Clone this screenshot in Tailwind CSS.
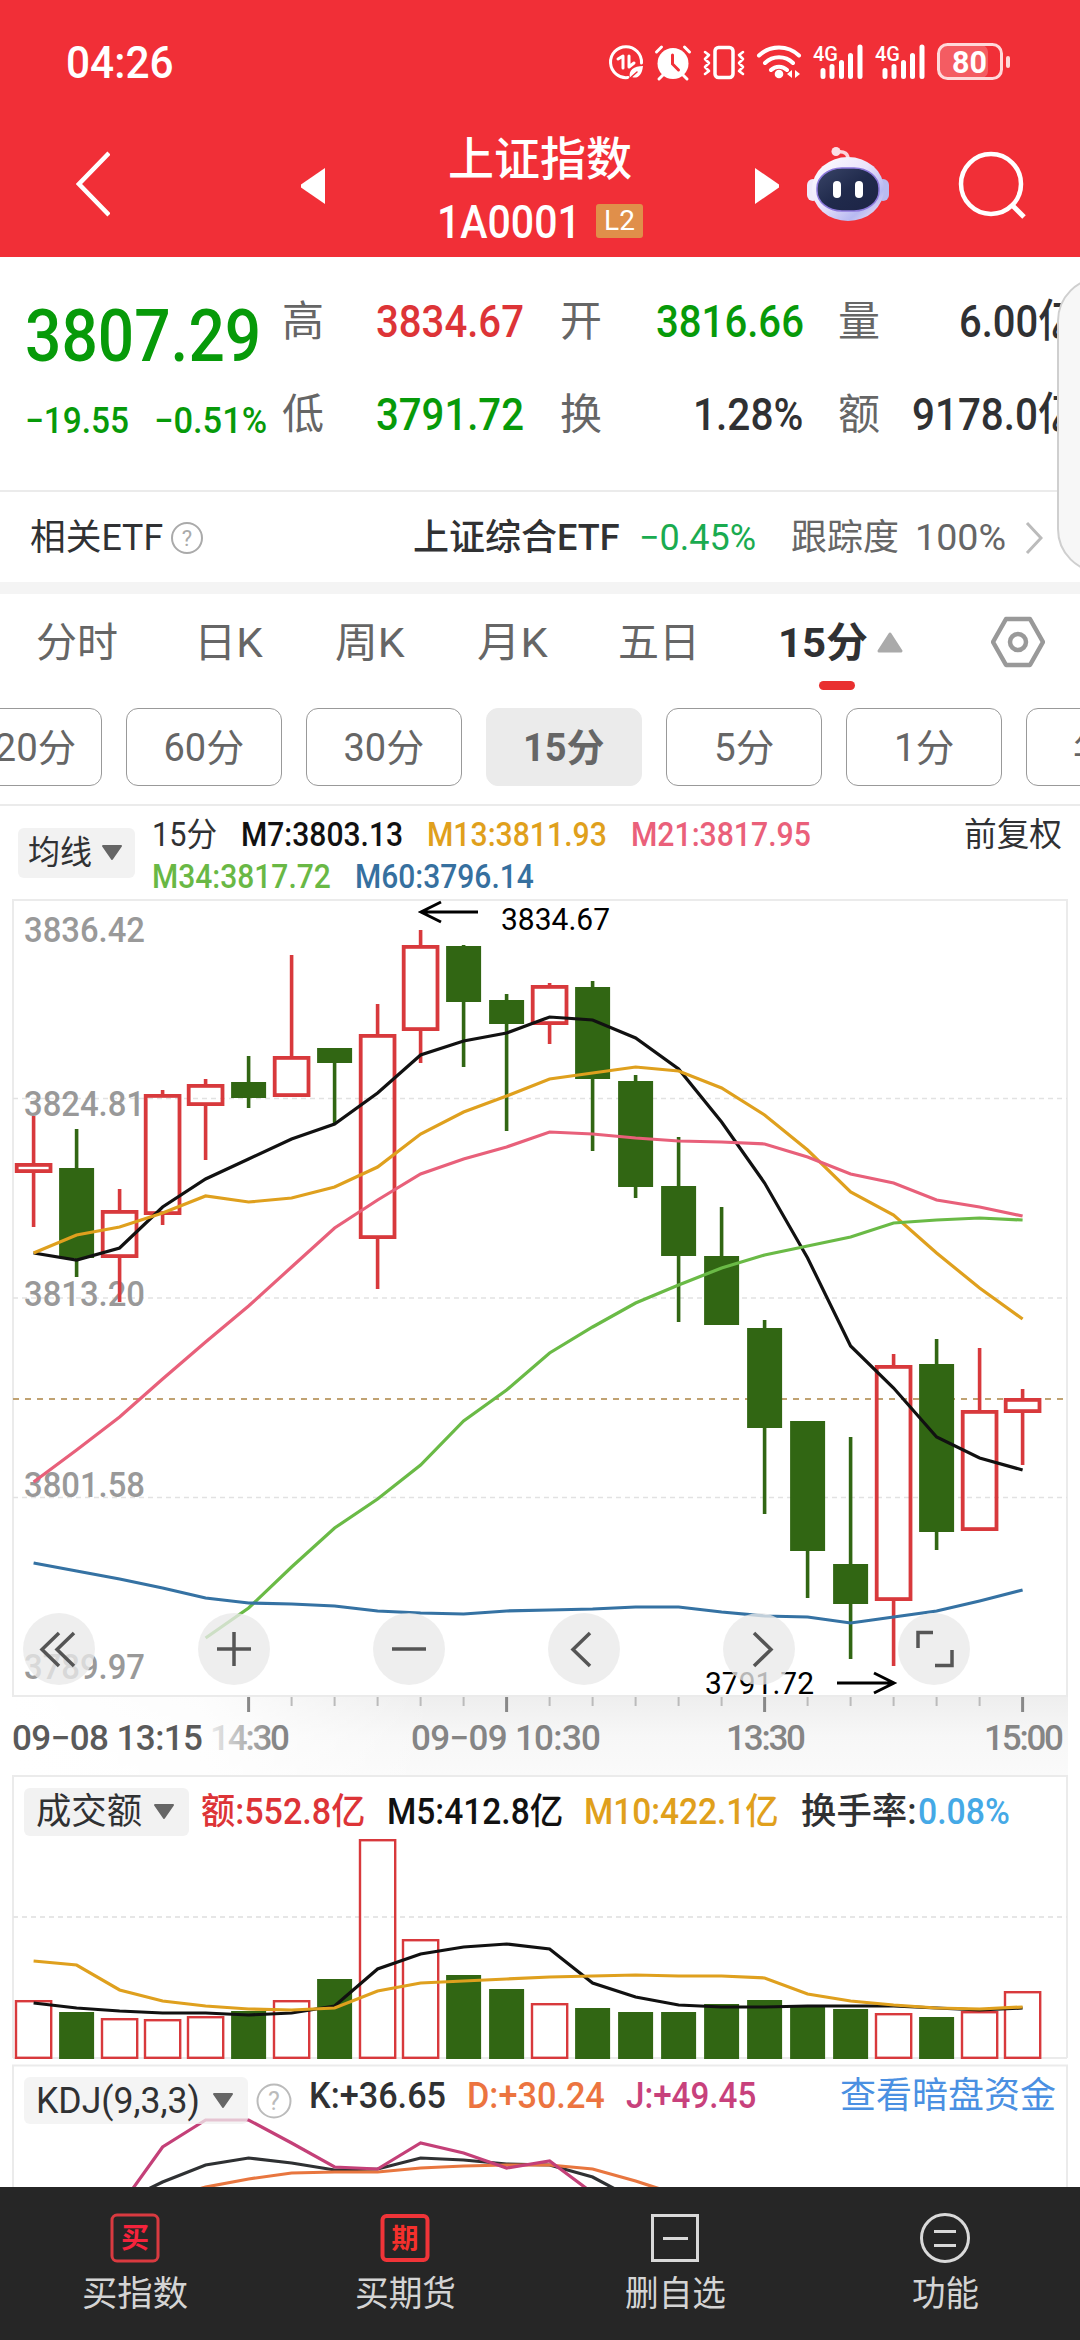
<!DOCTYPE html>
<html lang="zh-CN">
<head>
    <meta charset="UTF-8">
    <meta name="viewport" content="width=device-width, initial-scale=1.0">
    <title>上证指数 1A0001</title>
    <script src="https://cdn.jsdelivr.net/npm/@tailwindcss/browser@4"></script>
    <style>
        body { font-family: Roboto, "Noto Sans CJK SC", sans-serif; }
        [data-w] { display: inline-block; white-space: nowrap; transform-origin: left center; }
    </style>
</head>
<body class="bg-white w-[1080px] h-[2340px] overflow-hidden relative text-[#303133]">

    <!-- Header -->
    <header class="bg-[#f12f37] h-[257px] text-white">
        <div class="h-[124px] pl-[66px] pr-[70px] flex items-center justify-between">
            <span data-w="108" class="text-[44px] font-medium leading-none pt-[2px]">04:26</span>
            <svg class="w-[404px] h-[40px]" viewBox="605 41 404 40" fill="none" stroke="#fff" stroke-linecap="round">
                <!-- data saver -->
                <path d="M627 76.500A15.500 15.500 0 1 1 640.500 62" stroke-width="3"/>
                <path d="M617 58l5-3v12M628 55v11l5-4" stroke-width="3" stroke-linejoin="round"/>
                <path d="M629 77c-2-8 4-12 13-12c-1 10-6 13-11 11z" fill="#fff" stroke="none"/>
                <path d="M627 79l9-8" stroke="#f12f37" stroke-width="1.500"/>
                <!-- alarm -->
                <circle cx="672" cy="62.500" r="15.500" fill="#fff" stroke="none"/>
                <path d="M655.500 51l5-5M688.500 51l-5-5M662 74l-4 4M682 74l4 4" stroke-width="3"/>
                <path d="M671.500 54v9l6 6" stroke="#f12f37" stroke-width="3"/>
                <!-- vibrate -->
                <rect x="714" y="46.500" width="18" height="30" rx="3.500" stroke-width="3.500"/>
                <path d="M704 51l4 3l-4 4l4 4l-4 4l4 4l-4 3M742 51l-4 3l4 4l-4 4l4 4l-4 4l4 3" stroke-width="2.600" stroke-linejoin="round"/>
                <!-- wifi -->
                <path d="M758 54.500a29 29 0 0 1 40 0M764 62a20 20 0 0 1 28 0M770 69a11.500 11.500 0 0 1 16 0" stroke-width="4"/>
                <circle cx="778" cy="73" r="4.300" fill="#fff" stroke="none"/>
                <path d="M786 73l5-4v8zM799 73l-5-4v8z" fill="#fff" stroke="none"/>
                <!-- signal bars -->
                <path d="M822 69.500v6M831 65.500v10M840.500 61.500v14M849.500 54.500v21M859 46v29.500" stroke-width="5"/>
                <path d="M884 69.500v6M893 65.500v10M902.500 61.500v14M911.500 54.500v21M921 46v29.500" stroke-width="5"/>
                <g fill="#fff" stroke="none" font-size="21" font-weight="500">
                    <text x="812" y="60" textLength="25" lengthAdjust="spacingAndGlyphs">4G</text>
                    <text x="874" y="60" textLength="25" lengthAdjust="spacingAndGlyphs">4G</text>
                </g>
                <!-- battery -->
                <rect x="938" y="44" width="49" height="33" rx="7" fill="#fff" fill-opacity=".22" stroke="none"/>
                <rect x="937.500" y="43.500" width="63" height="34" rx="9" stroke="#ffd9da" stroke-width="3"/>
                <path d="M1007 57v8" stroke="#ffd9da" stroke-width="4"/>
                <text x="951" y="71.500" textLength="35" lengthAdjust="spacingAndGlyphs" fill="#fff" stroke="none" font-size="31" font-weight="700">80</text>
            </svg>
        </div>
        <div class="h-[133px] flex items-center">
            <svg class="w-[34px] h-[66px] ml-[76px] mb-[14px]" viewBox="0 0 34 66" fill="none" stroke="#fff" stroke-width="4.500"><path d="M33 2L3 33l30 31"/></svg>
            <svg class="w-[24px] h-[36px] ml-[191px] mb-[9px]" viewBox="0 0 24 36"><path d="M24 0v36L0 19.500v-3z" fill="#fff"/></svg>
            <div class="w-[430px] flex flex-col items-center pt-[5px]">
                <div class="text-[46px] font-medium leading-[60px]">上证指数</div>
                <div class="flex items-center gap-[15px] h-[68px] pb-[4px]">
                    <span data-w="144" class="text-[47px] font-medium leading-none">1A0001</span>
                    <span class="w-[47px] h-[34px] rounded-[3px] bg-[#e08f4a] text-[28px] leading-[34px] text-center">L2</span>
                </div>
            </div>
            <svg class="w-[24px] h-[36px] mb-[9px]" viewBox="0 0 24 36"><path d="M0 0v36l24-16.500v-3z" fill="#fff"/></svg>
            <svg class="w-[82px] h-[76px] ml-[28px] mb-[14px]" viewBox="0 0 82 76">
                <defs>
                    <linearGradient id="shell" x1="0" y1="0" x2="1" y2="1">
                        <stop offset="0" stop-color="#fff"/><stop offset=".45" stop-color="#ebe4fb"/><stop offset=".75" stop-color="#b7b9f2"/><stop offset="1" stop-color="#fbe8f0"/>
                    </linearGradient>
                    <linearGradient id="visor" x1="0" y1="0" x2="1" y2="1">
                        <stop offset="0" stop-color="#3a4568"/><stop offset=".5" stop-color="#202a4c"/><stop offset="1" stop-color="#1c2345"/>
                    </linearGradient>
                </defs>
                <path d="M30 6c7-1 12 1 11 10" fill="none" stroke="#fbd5dc" stroke-width="3.500"/>
                <circle cx="29" cy="5.500" r="4.500" fill="#fbdfe6"/>
                <rect x="0" y="33" width="12" height="22" rx="6" fill="#efeafb"/>
                <rect x="70" y="33" width="12" height="22" rx="6" fill="#b9bbf0"/>
                <ellipse cx="41" cy="43" rx="36" ry="32" fill="url(#shell)"/>
                <rect x="10" y="22" width="62" height="43" rx="25" ry="20" fill="url(#visor)" stroke="#8d79dc" stroke-width="1.500"/>
                <rect x="26" y="35" width="8" height="17" rx="4" fill="#fff"/>
                <rect x="48" y="35" width="8" height="17" rx="4" fill="#fff"/>
            </svg>
            <svg class="w-[68px] h-[68px] ml-[69px] mb-[12px]" viewBox="0 0 68 68" fill="none" stroke="#fff"><circle cx="33" cy="33" r="30" stroke-width="4.500"/><path d="M54 54l12 12" stroke-width="5"/></svg>
        </div>
    </header>

    <!-- Quote -->
    <section class="relative h-[235px] border-b-2 border-[#ebebeb] flex pl-[25px] pt-[18px]">
        <div class="w-[257px] text-[#079a09] font-medium">
            <div class="h-[122px] flex items-center"><span data-w="236" class="text-[73px] leading-none">3807.29</span></div>
            <div class="h-[48px] flex items-center gap-[25px] text-[36px] leading-none">
                <span data-w="104">−19.55</span>
                <span data-w="113">−0.51%</span>
            </div>
        </div>
        <div class="grid grid-cols-[94px_184px_96px_182px_74px_168px] auto-rows-[93px] items-center text-[45px] font-medium leading-none h-[186px]">
            <span class="text-[42px] font-normal text-[#666]">高</span><span data-w="148" class="text-[#dd3437]">3834.67</span>
            <span class="text-[42px] font-normal text-[#666]">开</span><span data-w="148" class="text-[#079a09]">3816.66</span>
            <span class="text-[42px] font-normal text-[#666]">量</span><span class="pl-[47px]"><span data-w="119">6.00亿</span></span>
            <span class="text-[42px] font-normal text-[#666]">低</span><span data-w="148" class="text-[#079a09]">3791.72</span>
            <span class="text-[42px] font-normal text-[#666]">换</span><span class="pl-[37px]"><span data-w="110">1.28%</span></span>
            <span class="text-[42px] font-normal text-[#666]">额</span><span data-w="166">9178.0亿</span>
        </div>
    </section>

    <!-- Related ETF -->
    <section class="h-[90px] flex items-center pl-[30px] pt-[2px] text-[36px] leading-none">
        <span data-w="133">相关ETF</span>
        <svg class="w-[34px] h-[34px] ml-[7px]" viewBox="0 0 34 34"><circle cx="17" cy="17" r="15" fill="none" stroke="#aaa" stroke-width="2"/><text x="17" y="25" text-anchor="middle" font-size="22" fill="#aaa">?</text></svg>
        <span data-w="206" class="font-medium ml-[209px]">上证综合ETF</span>
        <span data-w="117" class="text-[#1aab50] ml-[20px]">−0.45%</span>
        <span class="text-[#666] ml-[35px]">跟踪度</span>
        <span data-w="91" class="text-[#666] ml-[16px]">100%</span>
        <svg class="w-[18px] h-[34px] ml-[19px]" viewBox="0 0 18 34" fill="none" stroke="#bbb" stroke-width="3"><path d="M2 2l14 15L2 32"/></svg>
    </section>
    <div class="h-[12px] bg-[#f4f4f4]"></div>

    <!-- Period tabs -->
    <nav class="h-[114px] flex items-start pl-[36px] pt-[21px] text-[41px] leading-[56px] text-[#666]">
        <span class="w-[158px]">分时</span>
        <span class="w-[141px]"><span data-w="69">日K</span></span>
        <span class="w-[142px]"><span data-w="70">周K</span></span>
        <span class="w-[141px]"><span data-w="71">月K</span></span>
        <span class="w-[160px]">五日</span>
        <span class="w-[213px] h-[56px] relative flex items-center gap-[9px] text-[#303133]">
            <span data-w="90" class="font-bold">15分</span>
            <svg class="w-[26px] h-[22px]" viewBox="0 0 26 22"><path d="M13 2L24 19H2z" fill="#aaa" stroke="#aaa" stroke-width="3" stroke-linejoin="round"/></svg>
            <i class="absolute left-[41px] top-[66px] w-[36px] h-[9px] rounded-full bg-[#e93030]"></i>
        </span>
        <svg class="w-[54px] h-[52px] mt-[1px]" viewBox="0 0 54 52" fill="none" stroke="#999" stroke-width="4.500"><path d="M15 3h24L52 26L39 49H15L2 26z" stroke-linejoin="round"/><circle cx="27" cy="26" r="8"/></svg>
    </nav>
    <div class="w-[1080px] h-[98px] overflow-hidden border-b-2 border-[#ebebeb]">
        <div class="w-[1236px] -ml-[54px] flex gap-[24px] text-[38px] text-[#666] leading-[78px] text-center">
            <div class="w-[156px] h-[78px] rounded-[12px] border border-[#999]"><span data-w="103">120分</span></div>
            <div class="w-[156px] h-[78px] rounded-[12px] border border-[#999]"><span data-w="81">60分</span></div>
            <div class="w-[156px] h-[78px] rounded-[12px] border border-[#999]"><span data-w="81">30分</span></div>
            <div class="w-[156px] h-[78px] rounded-[12px] border border-[#ebebeb] bg-[#ebebeb] font-bold"><span data-w="82">15分</span></div>
            <div class="w-[156px] h-[78px] rounded-[12px] border border-[#999]"><span data-w="60">5分</span></div>
            <div class="w-[156px] h-[78px] rounded-[12px] border border-[#999]"><span data-w="60">1分</span></div>
            <div class="w-[156px] h-[78px] rounded-[12px] border border-[#999]"><span data-w="62">年K</span></div>
        </div>
    </div>

    <!-- MA legend -->
    <section class="h-[93px] flex pl-[18px] pr-[18px] text-[33px] font-medium leading-[40px]">
        <div class="w-[117px] h-[50px] mt-[22px] rounded-[6px] bg-[#f2f2f2] flex items-center gap-[9px] pl-[10px] font-normal">
            <span data-w="64">均线</span>
            <svg class="w-[22px] h-[16px]" viewBox="0 0 22 16"><path d="M2 1h18l-9 13z" fill="#666" stroke="#666" stroke-width="2" stroke-linejoin="round"/></svg>
        </div>
        <div class="ml-[17px] mt-[9px]">
            <div class="flex gap-[24px]">
                <span data-w="65" class="font-normal">15分</span>
                <span data-w="162" class="text-[#111]">M7:3803.13</span>
                <span data-w="180" class="text-[#e0a01c]">M13:3811.93</span>
                <span data-w="180" class="text-[#ea607a]">M21:3817.95</span>
            </div>
            <div class="flex gap-[24px] leading-[43px]">
                <span data-w="179" class="text-[#69b845]">M34:3817.72</span>
                <span data-w="179" class="text-[#36709f]">M60:3796.14</span>
            </div>
        </div>
        <span class="ml-auto mt-[9px] font-normal"><span data-w="98">前复权</span></span>
    </section>

    <!-- Candles -->
    <svg class="block w-[1080px] h-[876px]" viewBox="0 899 1080 876">
        <defs>
            <linearGradient id="axisV" x1="0" y1="0" x2="0" y2="1"><stop offset="0" stop-color="#eeeeee"/><stop offset=".5" stop-color="#f7f7f7"/><stop offset="1" stop-color="#fafafa"/></linearGradient>
            <linearGradient id="axisH"><stop offset="0" stop-color="#fff"/><stop offset=".45" stop-color="#fff" stop-opacity=".85"/><stop offset="1" stop-color="#fff" stop-opacity="0"/></linearGradient>
            <linearGradient id="fade" gradientUnits="userSpaceOnUse" x1="208" x2="275"><stop offset="0" stop-color="#f0f0f0"/><stop offset="1" stop-color="#858585"/></linearGradient>
        </defs>
        <rect x="13" y="1697" width="1055" height="78" fill="url(#axisV)"/>
        <rect x="13" y="1697" width="420" height="78" fill="url(#axisH)"/>
        <rect x="13" y="900" width="1054" height="796" fill="none" stroke="#ebebeb" stroke-width="2"/>
        <path d="M13 1098.500H1067M13 1298H1067M13 1497.500H1067" stroke="#e2e2e2" stroke-width="1.500" stroke-dasharray="5 4"/>
        <path d="M13 1399H1067" stroke="#c0a272" stroke-width="2" stroke-dasharray="6 6"/>
        <g fill="#999" font-size="35" font-weight="500">
            <text x="24" y="942" textLength="121" lengthAdjust="spacingAndGlyphs">3836.42</text>
            <text x="24" y="1116" textLength="121" lengthAdjust="spacingAndGlyphs">3824.81</text>
            <text x="24" y="1306" textLength="121" lengthAdjust="spacingAndGlyphs">3813.20</text>
            <text x="24" y="1497" textLength="121" lengthAdjust="spacingAndGlyphs">3801.58</text>
            <text x="24" y="1679" textLength="121" lengthAdjust="spacingAndGlyphs">3789.97</text>
        </g>
        <g id="candles"></g>
        <g fill="none" stroke="#000" stroke-width="3">
            <path d="M478 912H421M441 902L421 912L441 922"/>
            <path d="M837 1683H894M874 1673L894 1683L874 1693"/>
        </g>
        <g fill="#000" font-size="31">
            <text x="501" y="930" textLength="109" lengthAdjust="spacingAndGlyphs">3834.67</text>
            <text x="705" y="1694" textLength="109" lengthAdjust="spacingAndGlyphs">3791.72</text>
        </g>
        <g fill="#e9e9e9" fill-opacity=".78">
            <circle cx="59" cy="1649" r="36"/><circle cx="234" cy="1649" r="36"/><circle cx="409" cy="1649" r="36"/>
            <circle cx="584" cy="1649" r="36"/><circle cx="759" cy="1649" r="36"/><circle cx="934" cy="1649" r="36"/>
        </g>
        <g fill="none" stroke="#555" stroke-width="3.500">
            <path d="M59 1633L42 1649.500L59 1666M74 1633L57 1649.500L74 1666"/>
            <path d="M217 1649H251M234 1632V1666"/>
            <path d="M392 1649H426"/>
            <path d="M590 1633L573 1649.500L590 1666"/>
            <path d="M754 1633L771 1649.500L754 1666"/>
            <path d="M918 1648V1632.500H933M952 1650V1665.500H935"/>
        </g>
        <g id="ticks"></g>
        <g fill="#858585" font-size="35" font-weight="500">
            <text x="12" y="1750" textLength="191" fill="#5a5a5a">09−08 13:15</text>
            <text x="210" y="1750" textLength="80" fill="url(#fade)">14:30</text>
            <text x="411" y="1750" textLength="190">09−09 10:30</text>
            <text x="726" y="1750" textLength="80">13:30</text>
            <text x="984" y="1750" textLength="80">15:00</text>
        </g>
    </svg>

    <!-- Turnover -->
    <section class="relative h-[288px]">
        <svg class="block w-[1080px] h-[288px]" viewBox="0 1775 1080 288">
            <path d="M13 2058V1776H1067V2058" fill="none" stroke="#ebebeb" stroke-width="2"/>
            <path d="M13 2058H1067" stroke="#ebebeb" stroke-width="2"/>
            <path d="M13 1917H1067" stroke="#e6e6e6" stroke-width="2" stroke-dasharray="5 4"/>
            <g id="volume"></g>
        </svg>
        <div class="absolute left-[24px] top-[12px] flex items-center text-[36px] font-medium leading-[50px]">
            <div class="w-[165px] h-[48px] rounded-[6px] bg-[#f2f2f2] flex items-center gap-[11px] pl-[12px] font-normal">
                <span data-w="106">成交额</span>
                <svg class="w-[22px] h-[16px]" viewBox="0 0 22 16"><path d="M2 1h18l-9 13z" fill="#666" stroke="#666" stroke-width="2" stroke-linejoin="round"/></svg>
            </div>
            <span data-w="164" class="ml-[12px] text-[#dd3437]">额:552.8亿</span>
            <span data-w="176" class="ml-[22px] text-[#111]">M5:412.8亿</span>
            <span data-w="195" class="ml-[21px] text-[#e0a01c]">M10:422.1亿</span>
            <span data-w="116" class="ml-[22px]">换手率:</span>
            <span data-w="92" class="ml-[1px] text-[#45a9e6]">0.08%</span>
        </div>
    </section>

    <!-- KDJ -->
    <section class="relative h-[124px]">
        <svg class="block w-[1080px] h-[124px]" viewBox="0 2063 1080 124">
            <path d="M13 2190V2065.500H1067V2190" fill="none" stroke="#ebebeb" stroke-width="2"/>
            <g id="kdj"></g>
        </svg>
        <div class="absolute left-[24px] top-[14px] w-[1032px] flex text-[36px] leading-[38px]">
            <div class="w-[224px] h-[47px] rounded-[6px] bg-[#f0f0f0]/75 flex items-center gap-[12px] pl-[12px]">
                <span data-w="164">KDJ(9,3,3)</span>
                <svg class="w-[22px] h-[16px]" viewBox="0 0 22 16"><path d="M2 1h18l-9 13z" fill="#666" stroke="#666" stroke-width="2" stroke-linejoin="round"/></svg>
            </div>
            <svg class="w-[36px] h-[36px] ml-[8px] mt-[6px]" viewBox="0 0 36 36"><circle cx="18" cy="18" r="16.500" fill="none" stroke="#bbb" stroke-width="2"/><text x="18" y="27" text-anchor="middle" font-size="25" fill="#bbb">?</text></svg>
            <span data-w="137" class="ml-[17px] font-medium">K:+36.65</span>
            <span data-w="138" class="ml-[21px] font-medium text-[#ec7440]">D:+30.24</span>
            <span data-w="130" class="ml-[21px] font-medium text-[#c8417c]">J:+49.45</span>
            <span class="ml-auto text-[#4a90e2]">查看暗盘资金</span>
        </div>
    </section>

    <!-- Bottom bar -->
    <footer class="h-[153px] bg-[#262626] grid grid-cols-4 text-[35px] leading-[44px] text-[#d4d4d4]">
        <div class="flex flex-col items-center pt-[26px] gap-[10px]">
            <svg class="w-[50px] h-[50px]" viewBox="0 0 50 50"><rect x="2" y="2" width="46" height="46" rx="5" fill="none" stroke="#d93a40" stroke-width="3"/><text x="25" y="35" text-anchor="middle" font-size="28" font-weight="700" fill="#f5233c">买</text></svg>
            <span data-w="106">买指数</span>
        </div>
        <div class="flex flex-col items-center pt-[26px] gap-[10px]">
            <svg class="w-[50px] h-[50px]" viewBox="0 0 50 50"><rect x="2.500" y="3" width="45" height="44" rx="4" fill="none" stroke="#f03438" stroke-width="4"/><text x="25" y="35" text-anchor="middle" font-size="27" font-weight="700" fill="#f5302c">期</text></svg>
            <span data-w="101">买期货</span>
        </div>
        <div class="flex flex-col items-center pt-[26px] gap-[10px]">
            <svg class="w-[50px] h-[50px]" viewBox="0 0 50 50" fill="none" stroke="#d9d9d9" stroke-width="3"><path d="M2.500 2.500h45v45h-45zM13 25.500h25"/></svg>
            <span data-w="101">删自选</span>
        </div>
        <div class="flex flex-col items-center pt-[26px] gap-[10px]">
            <svg class="w-[50px] h-[50px]" viewBox="0 0 50 50" fill="none" stroke="#d9d9d9" stroke-width="3"><circle cx="25" cy="25" r="23.500"/><path d="M14 18.500h22M14 32.500h22"/></svg>
            <span data-w="67">功能</span>
        </div>
    </footer>

    <!-- Side drawer handle -->
    <div class="absolute left-[1057px] top-[277px] w-[23px] h-[296px] overflow-hidden">
        <div class="w-[80px] h-[296px] rounded-l-[44px] bg-[#f7f7f7] border-2 border-[#cfcfcf]"></div>
    </div>

    <script>
        // [up, high, top, bottom, low]
        const candles = [
            [1, 1116, 1163, 1173, 1227], [0, 1129, 1168, 1258, 1277], [1, 1189, 1210, 1258, 1302], [1, 1090, 1094, 1215, 1225],
            [1, 1079, 1084, 1106, 1160], [0, 1056, 1082, 1098, 1108], [1, 955, 1056, 1097, 1097], [0, 1048, 1048, 1063, 1124],
            [1, 1004, 1034, 1239, 1289], [1, 930, 945, 1031, 1063], [0, 945, 946, 1002, 1067], [0, 994, 1000, 1024, 1131],
            [1, 983, 985, 1025, 1044], [0, 981, 987, 1079, 1151], [0, 1075, 1081, 1187, 1198], [0, 1137, 1186, 1256, 1322],
            [0, 1207, 1256, 1325, 1325], [0, 1320, 1328, 1428, 1514], [0, 1421, 1421, 1551, 1598], [0, 1437, 1564, 1604, 1659],
            [1, 1354, 1365, 1601, 1666], [0, 1339, 1364, 1532, 1550], [1, 1348, 1410, 1531, 1531], [1, 1389, 1398, 1413, 1465]
        ];
        const volumes = [2000, 2012, 2018, 2019, 2016, 2011, 2000, 1979, 1839, 1939, 1975, 1989, 2003, 2008, 2012, 2012, 2004, 2000, 2007, 2009, 2013, 2017, 2011, 1991];
        const RED = '#d8393c', GREEN = '#316613';
        const x = i => 33.6 + i * 43;

        function line(from, ys, color) {
            const pts = ys.map((y, i) => `${x(from + i)},${y}`).join(' ');
            return `<polyline points="${pts}" fill="none" stroke="${color}" stroke-width="3.2"/>`;
        }

        function bar(i, up, top, bottom, sw) {
            return up
                ? `<rect x="${x(i) - 18.8 + sw / 2}" y="${top + sw / 2}" width="${37.6 - sw}" height="${bottom - top - sw}" fill="none" stroke="${RED}" stroke-width="${sw}"/>`
                : `<rect x="${x(i) - 17.5}" y="${top}" width="35" height="${bottom - top}" fill="${GREEN}"/>`;
        }

        document.getElementById('candles').innerHTML = candles.map(([up, h, t, b, l], i) =>
            `<path d="M${x(i)} ${h}V${t}M${x(i)} ${b}V${l}" stroke="${up ? RED : GREEN}" stroke-width="3.6"/>` + bar(i, up, t, b, 3.8)
        ).join('')
            + line(0, [1253, 1260, 1248, 1207, 1179, 1159, 1139, 1124, 1093, 1055, 1041, 1033, 1017, 1020, 1038, 1069, 1122, 1183, 1258, 1346, 1388, 1437, 1458, 1470], '#111')
            + line(0, [1253, 1235, 1227, 1213, 1196, 1202, 1198, 1187, 1167, 1134, 1112, 1096, 1079, 1073, 1067, 1071, 1088, 1115, 1150, 1192, 1215, 1253, 1288, 1319], '#dfa01e')
            + line(0, [1482, 1450, 1417, 1379, 1342, 1306, 1267, 1228, 1200, 1174, 1159, 1147, 1132, 1134, 1138, 1141, 1142, 1144, 1157, 1174, 1183, 1200, 1207, 1216], '#e8607a')
            + line(4, [1638, 1608, 1567, 1528, 1499, 1465, 1421, 1390, 1353, 1327, 1303, 1285, 1268, 1255, 1246, 1237, 1223, 1220, 1218, 1220], '#6aba46')
            + line(0, [1563, 1571, 1579, 1588, 1598, 1603, 1604, 1606, 1611, 1613, 1614, 1611, 1610, 1609, 1607, 1607, 1612, 1616, 1617, 1623, 1617, 1611, 1601, 1590], '#3572a3');

        document.getElementById('volume').innerHTML = volumes.map((v, i) => bar(i, candles[i][0], v, 2059, 2.4)).join('')
            + line(0, [2003, 2008, 2011, 2013, 2013, 2015, 2013, 2006, 1969, 1954, 1947, 1944, 1949, 1983, 1997, 2005, 2007, 2007, 2006, 2006, 2006, 2008, 2010, 2008], '#111')
            + line(0, [1961, 1965, 1990, 2001, 2006, 2009, 2010, 2008, 1991, 1983, 1981, 1979, 1977, 1976, 1975, 1976, 1976, 1978, 1994, 2001, 2005, 2008, 2009, 2007], '#dfa01e');

        document.getElementById('kdj').innerHTML =
            line(2, [2203, 2182, 2165, 2158, 2163, 2170, 2169, 2158, 2160, 2164, 2165, 2177, 2200], '#2f3133')
            + line(3, [2200, 2187, 2179, 2173, 2172, 2172, 2168, 2166, 2165, 2165, 2169, 2181, 2195], '#e8763f')
            + line(2, [2207, 2147, 2120, 2120, 2143, 2167, 2169, 2143, 2153, 2168, 2161, 2193], '#c44078');

        // hour marks every six candles
        let ticks = '';
        for (let i = 5; i < 24; i++) {
            const major = (i - 5) % 6 === 0;
            ticks += `<path d="M${x(i)} 1697v${major ? 15 : 9}" stroke="${major ? '#888' : '#bbb'}" stroke-width="${major ? 3 : 2}"/>`;
        }
        document.getElementById('ticks').innerHTML = ticks;

        function fit(el) {
            el.style.width = 'max-content';
            const natural = el.offsetWidth;
            el.style.width = el.dataset.w + 'px';
            el.style.flexShrink = 0;
            el.style.textAlign = 'left';
            el.style.transform = `scaleX(${el.dataset.w / natural})`;
        }
        const labels = document.querySelectorAll('[data-w]');
        // the text size changes once the stylesheet is in, so measure again then
        const observer = new ResizeObserver(entries => entries.forEach(e => fit(e.target)));
        labels.forEach(el => { fit(el); observer.observe(el); });
        window.addEventListener('load', () => labels.forEach(fit));
    </script>
</body>
</html>
